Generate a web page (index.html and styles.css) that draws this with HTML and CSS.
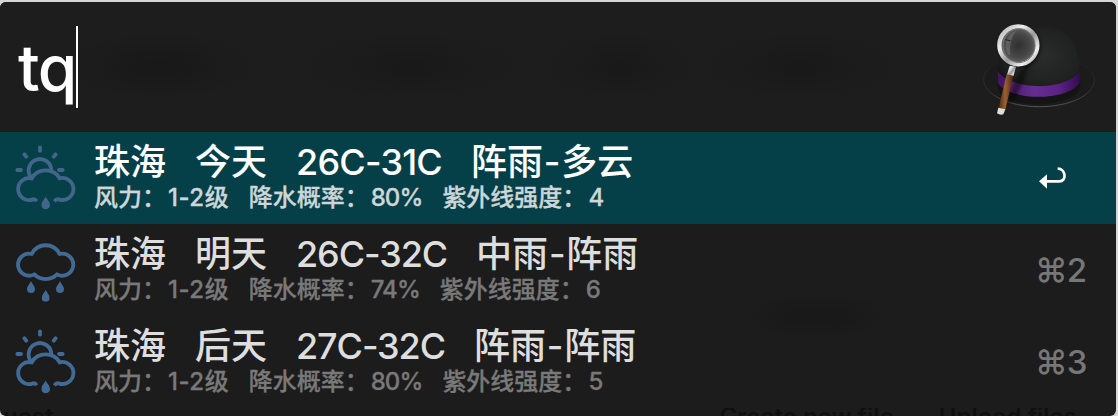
FILE: index.html
```html
<!DOCTYPE html>
<html lang="zh-CN">
<head>
<meta charset="utf-8">
<title>tq</title>
<link rel="stylesheet" href="styles.css">
</head>
<body>
<svg class="defs" width="0" height="0">
  <defs>
    <symbol id="drop" viewBox="0 0 24 36"><path d="M12 0C15 9 24 15 24 24A12 12 0 0 1 0 24C0 15 9 9 12 0Z"/></symbol>
    <symbol id="sunrain" viewBox="0 0 186 198">
      <g fill="none" stroke="currentColor" stroke-width="11.500">
        <path d="M48 97A34 34 0 1 1 109 76"/>
        <path d="M65 169Q60 161 54 163A33 33 0 1 1 50 100C68 68 116 68 134 100A33 33 0 1 1 131 163Q124 161 118 169"/>
        <g stroke-linecap="round"><path d="M75 7V17M28 28L34 35M122 28L116 35M7 75H18M132 75H143"/></g>
      </g>
      <use href="#drop" x="79" y="154" width="26" height="39" fill="currentColor"/>
    </symbol>
    <symbol id="rain" viewBox="0 0 186 198">
      <path fill="none" stroke="currentColor" stroke-width="11.500" stroke-linejoin="round" d="M58 112A33 33 0 1 1 50 51C68 16 116 16 134 51A33 33 0 1 1 126 112C110 131 74 131 58 112Z"/>
      <g fill="currentColor"><use href="#drop" x="36" y="132" width="24" height="36"/><use href="#drop" x="80" y="158" width="24" height="36"/><use href="#drop" x="123" y="132" width="24" height="36"/></g>
    </symbol>
  </defs>
</svg>
<main class="window">
  <header class="search">
    <div class="query"><span class="query-text">tq</span><i class="caret"></i></div>
    <svg class="hat" viewBox="0 0 474 390">
      <defs>
        <radialGradient id="felt" cx=".55" cy=".5" r=".6"><stop offset="0" stop-color="#2b2d2d"/><stop offset=".8" stop-color="#1f2121"/><stop offset="1" stop-color="#141515"/></radialGradient>
        <linearGradient id="band"><stop offset="0" stop-color="#42145f"/><stop offset=".45" stop-color="#672c90"/><stop offset=".75" stop-color="#5b2283"/><stop offset="1" stop-color="#340b50"/></linearGradient>
        <linearGradient id="rim" x2="1" y2="1"><stop offset="0" stop-color="#aaa"/><stop offset=".3" stop-color="#eee"/><stop offset=".55" stop-color="#999"/><stop offset=".8" stop-color="#f2f2f2"/><stop offset="1" stop-color="#888"/></linearGradient>
        <radialGradient id="lens"><stop offset="0" stop-color="#303030"/><stop offset=".65" stop-color="#484848"/><stop offset="1" stop-color="#6a6a6a"/></radialGradient>
        <linearGradient id="wood"><stop offset="0" stop-color="#51280f"/><stop offset=".45" stop-color="#9a6134"/><stop offset="1" stop-color="#4a240e"/></linearGradient>
        <linearGradient id="brim" x2="0" y2="1"><stop offset="0" stop-color="#222"/><stop offset=".6" stop-color="#303030"/><stop offset="1" stop-color="#555"/></linearGradient>
        <filter id="soft"><feGaussianBlur stdDeviation="5"/></filter>
      </defs>
      <path d="M112 184C85 196 70 215 71 233C73 278 145 314 238 314S401 279 403 235C403 215 388 196 357 184Z" fill="#1b1b1b" stroke="url(#brim)" stroke-width="3"/>
      <path d="M112 206C112 264 112 276 145 290C195 314 282 311 334 286C359 274 361 259 361 234Z" fill="#141414"/>
      <path d="M114 214C116 144 134 76 249 74C333 76 355 130 358 214C325 264 157 264 114 214Z" fill="url(#felt)"/>
      <path d="M113 206C148 265 320 269 359 207V242C325 297 151 300 113 242Z" fill="url(#band)"/>
      <path d="M213 181Q177 199 162 247L139 312L164 293L193 234Z" fill="#000" opacity=".42" filter="url(#soft)"/>
      <circle cx="180" cy="135" r="63" fill="#000" opacity=".5" filter="url(#soft)"/>
      <path d="M149 191L168 194L160 223L141 218Z" fill="url(#rim)"/>
      <path d="M140 217L160 221L136 323L116 318Z" fill="url(#wood)"/>
      <path d="M115 317L136 322L130 337Q121 341 111 334Z" fill="#ddd"/>
      <circle cx="175" cy="130" r="57" fill="url(#lens)" stroke="url(#rim)" stroke-width="13"/>
      <ellipse cx="177" cy="131" rx="48" ry="51" fill="none" stroke="#777" stroke-width="3"/>
      <path d="M146 160Q125 126 153 95L170 85Q146 113 151 158Z" fill="#aaa" opacity=".25"/>
      <path d="M136 113L151 116" stroke="#222" stroke-width="3"/>
    </svg>
  </header>
  <section class="results">
    <article class="row selected">
      <svg class="weather"><use href="#sunrain"/></svg>
      <div class="copy">
        <h2><span>珠海</span><span>今天</span><span class="temp">26C-31C</span><span>阵雨<b class="dash">-</b>多云</span></h2>
        <p><span>风力：<b class="wind">1-2</b>级</span><span>降水概率：<b class="rate">80%</b></span><span>紫外线强度：<b>4</b></span></p>
      </div>
      <div class="key"><svg class="return" viewBox="0 0 84 66"><path d="M56 5C81 5 84 43 61 43H22" fill="none" stroke="#fff" stroke-width="8"/><path d="M0 43L24 22V65Z" fill="#fff"/></svg></div>
    </article>
    <article class="row">
      <svg class="weather"><use href="#rain"/></svg>
      <div class="copy">
        <h2><span>珠海</span><span>明天</span><span class="temp">26C-32C</span><span>中雨<b class="dash">-</b>阵雨</span></h2>
        <p><span>风力：<b class="wind">1-2</b>级</span><span>降水概率：<b class="rate">74%</b></span><span>紫外线强度：<b>6</b></span></p>
      </div>
      <div class="key">⌘2</div>
    </article>
    <article class="row">
      <svg class="weather"><use href="#sunrain"/></svg>
      <div class="copy">
        <h2><span>珠海</span><span>后天</span><span class="temp">27C-32C</span><span>阵雨<b class="dash">-</b>阵雨</span></h2>
        <p><span>风力：<b class="wind">1-2</b>级</span><span>降水概率：<b class="rate">80%</b></span><span>紫外线强度：<b>5</b></span></p>
      </div>
      <div class="key">⌘3</div>
    </article>
  </section>
  <footer class="behind"><span class="request">quest</span><span class="create">Create new file</span><span class="upload">Upload files</span></footer>
</main>
</body>
</html>
```
FILE: styles.css
```css
* { box-sizing: border-box; }
body { margin: 0; height: 416px; overflow: hidden; padding: 2px 2px 0 0; background: #d5d7d7; font-family: Inter, "Noto Sans CJK SC", sans-serif; }
.defs { position: absolute; }
.window { height: 414px; overflow: hidden; border-radius: 6px; background: radial-gradient(ellipse 80px 24px at 816px 314px, #181818, transparent), #1c1c1c; display: flex; flex-direction: column; }
.search { height: 130px; flex: none; display: flex; justify-content: space-between; background:
  radial-gradient(ellipse 95px 34px at 160px 64px, #181818, transparent),
  radial-gradient(ellipse 110px 34px at 410px 64px, #191919, transparent),
  radial-gradient(ellipse 75px 34px at 620px 64px, #191919, transparent),
  radial-gradient(ellipse 100px 34px at 800px 64px, #191919, transparent), #1d1d1d; }
.query { display: flex; padding: 24px 0 0 18px; }
.query-text { font-size: 64px; line-height: 84px; font-weight: 500; letter-spacing: -1.5px; color: #fff; width: 58px; white-space: nowrap; }
.caret { width: 2px; height: 82px; background: #fff; }
.hat { width: 158px; height: 130px; margin-right: -2px; }
.row { height: 92px; display: flex; padding-left: 15px; color: #dedede; }
.weather { width: 62px; height: 66px; margin-top: 13px; color: #416a94; flex: none; }
.copy { margin-left: 17px; flex: 1; padding-top: 6px; }
h2, p { margin: 0; display: flex; white-space: pre; }
h2 { font-size: 36px; line-height: 48px; font-weight: 500; gap: 29px; height: 48px; }
.temp { letter-spacing: -1.1px; }
.selected .temp { letter-spacing: -.8px; }
.dash { margin: 0 .8px; }
p { font-size: 24px; line-height: 28px; font-weight: 500; color: #797979; gap: 20px; margin-top: -2px; -webkit-text-stroke: .3px currentColor; }
b { font-weight: 500; }
p b { margin-left: 2px; }
.wind { letter-spacing: .5px; }
.rate { letter-spacing: -.9px; }
.key { width: 79px; font-size: 33px; font-weight: 500; line-height: 92px; color: #777; white-space: nowrap; text-indent: -2px; letter-spacing: -1px; }
.selected { background: #053f47; color: #fff; }
.selected p { color: #cdd7d9; }
.selected .weather { color: #42658b; }
.return { display: block; width: 28px; height: 22px; margin: 35px 0 0 2px; }
.behind { height: 8px; overflow: hidden; display: flex; font: 600 24px/28px Inter, sans-serif; color: #101010; white-space: nowrap; }
.behind span { margin-top: -5px; }
.behind .request { margin-left: -12px; }
.behind .create { margin-left: 666px; }
.behind .upload { margin-left: 45px; }
```
